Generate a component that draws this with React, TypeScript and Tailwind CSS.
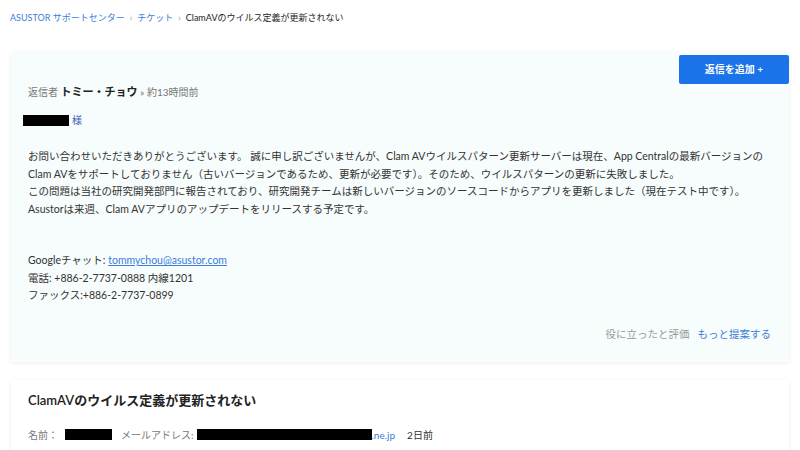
const font = "font-['Lato','Noto_Sans_CJK_JP',sans-serif]"

const App = () => {
  return (
    <div className={`w-[800px] h-[450px] overflow-hidden bg-white text-[#333] ${font}`}>
      <nav className="h-[37px] pl-[10px] pt-[11px] flex items-start text-[9px] leading-[14px]">
        <a href="#" className="text-[#3b7dd8]">ASUSTOR サポートセンター</a>
        <span className="mx-[5px] text-[#999]">›</span>
        <a href="#" className="text-[#3b7dd8]">チケット</a>
        <span className="mx-[5px] text-[#999]">›</span>
        <span className="text-[#222]">ClamAVのウイルス定義が更新されない</span>
      </nav>

      <div className="mx-[11px] mt-[15px] bg-[#f7fcfc] shadow-[0_1px_4px_rgba(0,0,0,0.07)]">
        <div className="flex justify-end pt-[3px]">
          <button className="w-[110px] h-[29px] bg-[#1a73e8] text-white text-[10px] font-semibold rounded-[2px]">
            返信を追加 +
          </button>
        </div>
        <div className="pl-[17px] pr-[18px]">
          <div className="text-[10px] leading-[16px] text-[#777]">
            返信者 <span className="text-[#222] font-bold text-[11px]">トミー・チョウ</span> » 約13時間前
          </div>
          <div className="mt-[13px] flex items-center text-[10px] leading-[14px]">
            <span className="w-[46px] h-[11px] bg-black ml-[-5px]" />
            <span className="ml-[3px] text-[#3b5bb5]">様</span>
          </div>
          <div className="mt-[21px] text-[10.5px] leading-[17.5px] text-[#333]">
            <p>お問い合わせいただきありがとうございます。 誠に申し訳ございませんが、Clam AVウイルスパターン更新サーバーは現在、App Centralの最新バージョンのClam AVをサポートしておりません（古いバージョンであるため、更新が必要です）。そのため、ウイルスパターンの更新に失敗しました。</p>
            <p>この問題は当社の研究開発部門に報告されており、研究開発チームは新しいバージョンのソースコードからアプリを更新しました（現在テスト中です）。</p>
            <p>Asustorは来週、Clam AVアプリのアップデートをリリースする予定です。</p>
          </div>
          <div className="mt-[34px] text-[10.5px] leading-[17.5px] text-[#333]">
            <p>Googleチャット: <a href="#" className="text-[#3b7dd8] underline">tommychou@asustor.com</a></p>
            <p>電話: +886-2-7737-0888 内線1201</p>
            <p>ファックス:+886-2-7737-0899</p>
          </div>
          <div className="mt-[21px] pb-[20px] flex justify-end text-[10.5px] leading-[16px]">
            <span className="text-[#999]">役に立ったと評価</span>
            <a href="#" className="ml-[8px] text-[#3b7dd8]">もっと提案する</a>
          </div>
        </div>
      </div>

      <div className="mx-[11px] mt-[18px] bg-white shadow-[0_1px_4px_rgba(0,0,0,0.07)] pl-[17px] pt-[10px] pb-[20px]">
        <h2 className="text-[13px] leading-[20px] font-semibold text-[#222]">ClamAVのウイルス定義が更新されない</h2>
        <div className="mt-[18px] flex items-center text-[10px] leading-[14px] text-[#777]">
          <span>名前：</span>
          <span className="ml-[7px] w-[47px] h-[11px] bg-black" />
          <span className="ml-[9px]">メールアドレス:</span>
          <span className="ml-[3px] w-[175px] h-[11px] bg-black" />
          <span className="text-[#3b7dd8]">.ne.jp</span>
          <span className="ml-[12px] text-[#333]">2日前</span>
        </div>
      </div>
    </div>
  )
}

export default App
